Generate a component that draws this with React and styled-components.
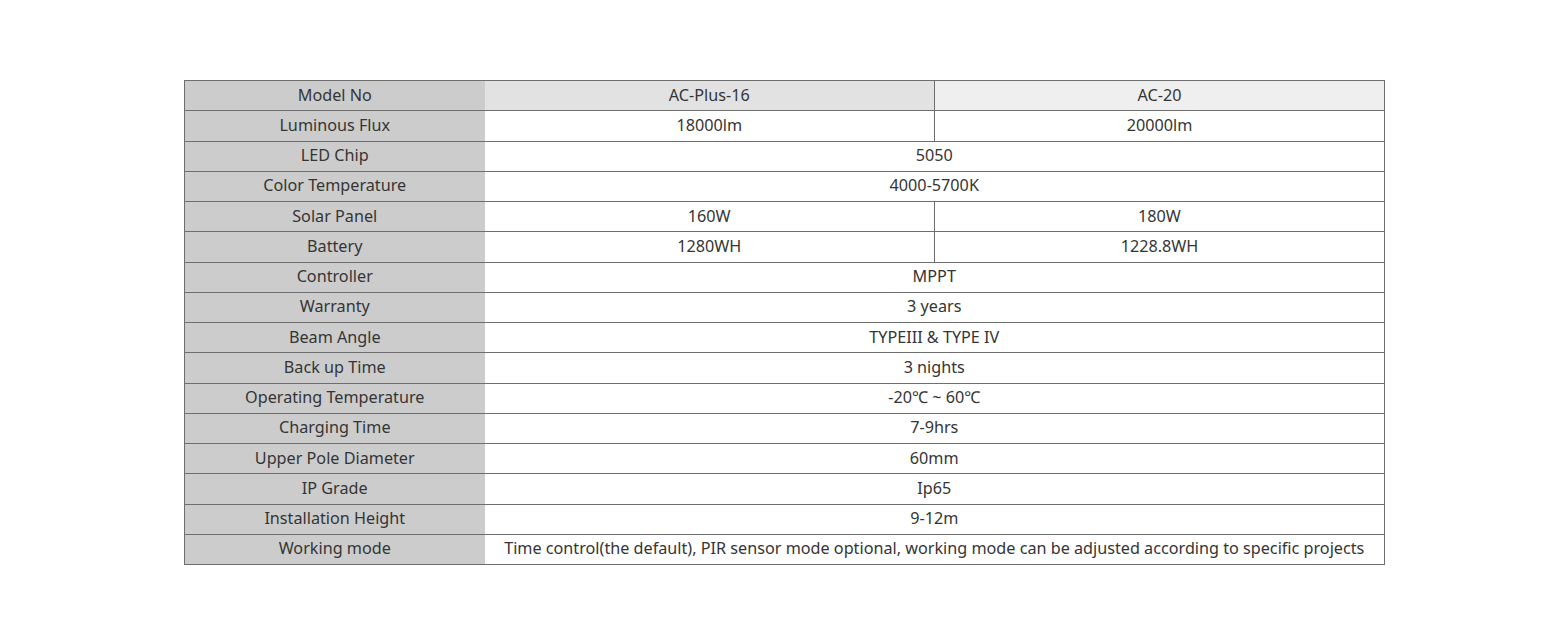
import styled, { createGlobalStyle } from 'styled-components';

const Global = createGlobalStyle`
  html, body {
    margin: 0;
    padding: 0;
    background: #fff;
  }
  body {
    font-family: 'Noto Sans', 'Open Sans', sans-serif;
    color: #333;
  }
`;

const Page = styled.div`
  width: 1568px;
  height: 641px;
  padding-top: 80px;
  box-sizing: border-box;
`;

const Spec = styled.table`
  margin-left: 184px;
  width: 1200px;
  border-collapse: collapse;
  table-layout: fixed;
  border: 1px solid #6e6e6e;
  font-size: 16.2px;
`;

const Row = styled.tr`
  height: 30.25px;
`;

const Label = styled.td`
  padding: 0 0 2px;
  text-align: center;
  background: #cccccc;
  border-top: 1px solid #6e6e6e;
  color: #353535;
`;

const Value = styled.td`
  padding: 0 0 2px;
  text-align: center;
  border: 1px solid #6e6e6e;
  border-left: ${(p) => (p.$first ? 'none' : '1px solid #6e6e6e')};
  background: ${(p) => p.$bg || '#fff'};
  color: #353535;
`;

const rows = [
  ['Model No', 'AC-Plus-16', 'AC-20'],
  ['Luminous Flux', '18000lm', '20000lm'],
  ['LED Chip', '5050'],
  ['Color Temperature', '4000-5700K'],
  ['Solar Panel', '160W', '180W'],
  ['Battery', '1280WH', '1228.8WH'],
  ['Controller', 'MPPT'],
  ['Warranty', '3 years'],
  ['Beam Angle', 'TYPEIII & TYPE IV'],
  ['Back up Time', '3 nights'],
  ['Operating Temperature', '-20℃ ~ 60℃'],
  ['Charging Time', '7-9hrs'],
  ['Upper Pole Diameter', '60mm'],
  ['IP Grade', 'Ip65'],
  ['Installation Height', '9-12m'],
  [
    'Working mode',
    'Time control(the default), PIR sensor mode optional, working mode can be adjusted according to specific projects',
  ],
];

export default function App() {
  return (
    <Page>
      <Global />
      <Spec>
        <colgroup>
          <col style={{ width: '300px' }} />
          <col style={{ width: '450px' }} />
          <col style={{ width: '450px' }} />
        </colgroup>
        <tbody>
          {rows.map((r, i) => (
            <Row key={r[0]}>
              <Label>{r[0]}</Label>
              {r.length === 3 ? (
                <>
                  <Value $first $bg={i === 0 ? '#e2e2e2' : null}>{r[1]}</Value>
                  <Value $bg={i === 0 ? '#efefef' : null}>{r[2]}</Value>
                </>
              ) : (
                <Value $first colSpan={2}>{r[1]}</Value>
              )}
            </Row>
          ))}
        </tbody>
      </Spec>
    </Page>
  );
}
